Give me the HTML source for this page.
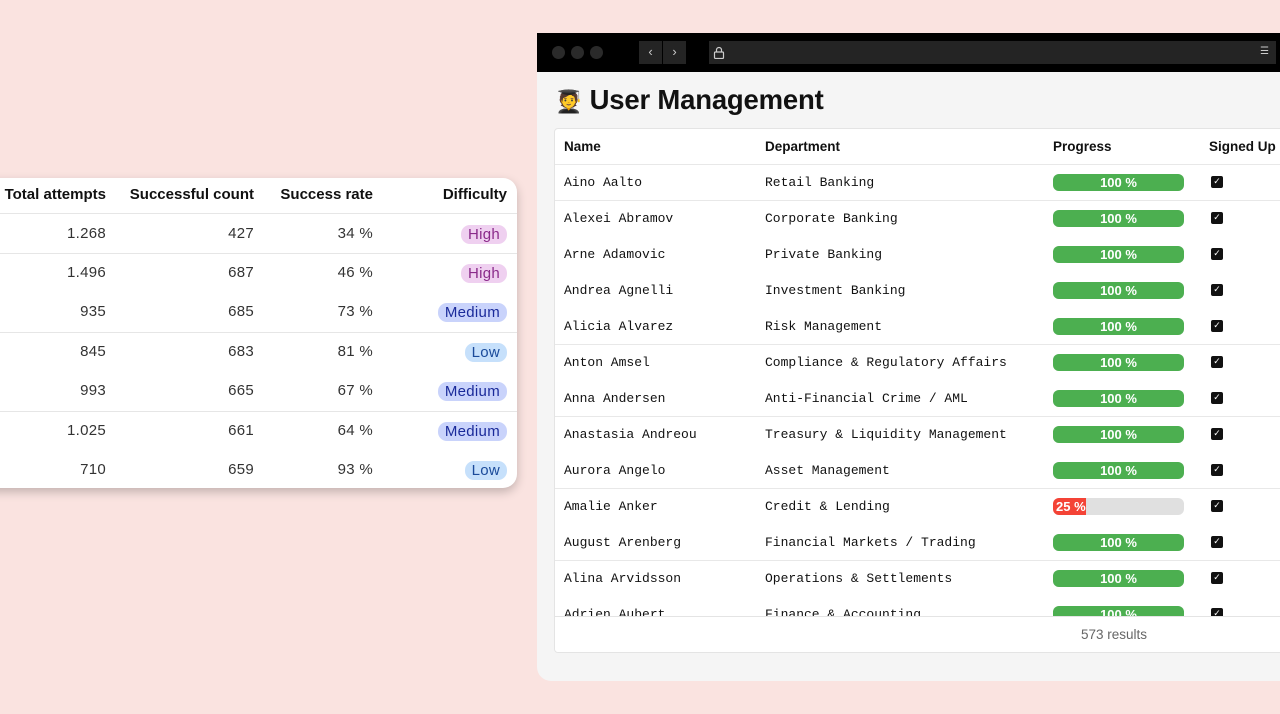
<!DOCTYPE html>
<html><head><meta charset="utf-8"><style>
*{box-sizing:border-box;margin:0;padding:0}
body{width:1280px;height:714px;background:#fae3e0;position:relative;overflow:hidden;font-family:"Liberation Sans",sans-serif;color:#111}
.lc{position:absolute;left:-20px;top:178px;width:537px;height:310px;background:#fff;border-radius:14px;box-shadow:0 4px 10px rgba(0,0,0,.22)}
.lc .r{position:absolute;left:0;width:537px;height:20px;font-size:15px;color:#333;letter-spacing:.3px}
.lc .r span{position:absolute;text-align:right;white-space:nowrap}
.lc .h{font-weight:bold;color:#111;letter-spacing:0}
.c1{right:411px}.c2{right:263px}.c3{right:144px}.c4{right:10px}
.hl{position:absolute;left:0;width:537px;height:1px;background:#e6e6e6}
.b{display:inline-block;border-radius:9px;padding:1px 7px;line-height:17px}
.hi{background:#efd0f0;color:#8a2a8a}.me{background:#c9d3fb;color:#1a2a9a}.lo{background:#c6e0fb;color:#1a4a9a}
.win{position:absolute;left:537px;top:33px;width:750px;height:648px;background:#f5f5f5;border-radius:0 0 0 14px;overflow:hidden}
.bar{height:39px;background:#000;position:relative}
.dot{position:absolute;top:13px;width:13px;height:13px;border-radius:50%;background:#2a2a2a}
.nav{position:absolute;top:8px;height:23px;background:#242424;color:#ccc;font-size:13px;text-align:center;line-height:22px}
h1{position:absolute;left:18px;top:51px;font-size:27.5px;font-weight:bold;letter-spacing:-.2px}
.card{position:absolute;left:17px;top:95px;width:740px;height:525px;background:#fff;border:1px solid #e4e4e4;border-radius:4px;overflow:hidden}
.row{position:absolute;left:0;width:740px;height:36px;font-family:"Liberation Mono",monospace;font-size:13px;color:#111}
.row div{position:absolute;top:11px;white-space:nowrap}
.th{font-family:"Liberation Sans",sans-serif;font-weight:bold;font-size:13.5px}
.pg{position:absolute;left:498px;top:10px;width:131px;height:17px;border-radius:6px;background:#e0e0e0;overflow:hidden}
.pg i{position:absolute;left:0;top:0;bottom:0;background:#4caf50;color:#fff;font:bold 13px "Liberation Sans",sans-serif;font-style:normal;text-align:center;line-height:18px}
.cb{position:absolute;left:656px;top:12px;width:12px;height:12px;background:#111;border-radius:2px;color:#fff;font-size:9px;line-height:12px;text-align:center;font-family:"DejaVu Sans",sans-serif}
.ln{position:absolute;left:0;width:740px;height:1px;background:#e8e8e8}
</style></head><body>
<div class="lc">
<div class="r h" style="top:8px"><span class="c1">Total attempts</span><span class="c2">Successful count</span><span class="c3">Success rate</span><span class="c4">Difficulty</span></div>
<div class="hl" style="top:35px"></div>
<div class="r" style="top:47px"><span class="c1">1.268</span><span class="c2">427</span><span class="c3">34 %</span><span class="c4"><b class="b hi" style="font-weight:normal">High</b></span></div>
<div class="hl" style="top:75px"></div>
<div class="r" style="top:86px"><span class="c1">1.496</span><span class="c2">687</span><span class="c3">46 %</span><span class="c4"><b class="b hi" style="font-weight:normal">High</b></span></div>
<div class="r" style="top:125px"><span class="c1">935</span><span class="c2">685</span><span class="c3">73 %</span><span class="c4"><b class="b me" style="font-weight:normal">Medium</b></span></div>
<div class="hl" style="top:154px"></div>
<div class="r" style="top:165px"><span class="c1">845</span><span class="c2">683</span><span class="c3">81 %</span><span class="c4"><b class="b lo" style="font-weight:normal">Low</b></span></div>
<div class="r" style="top:204px"><span class="c1">993</span><span class="c2">665</span><span class="c3">67 %</span><span class="c4"><b class="b me" style="font-weight:normal">Medium</b></span></div>
<div class="hl" style="top:233px"></div>
<div class="r" style="top:244px"><span class="c1">1.025</span><span class="c2">661</span><span class="c3">64 %</span><span class="c4"><b class="b me" style="font-weight:normal">Medium</b></span></div>
<div class="r" style="top:283px"><span class="c1">710</span><span class="c2">659</span><span class="c3">93 %</span><span class="c4"><b class="b lo" style="font-weight:normal">Low</b></span></div>
</div>
<div class="win">
<div class="bar">
<div class="dot" style="left:15px"></div><div class="dot" style="left:34px"></div><div class="dot" style="left:53px"></div>
<div class="nav" style="left:102px;width:23px">‹</div><div class="nav" style="left:126px;width:23px">›</div>
<div class="nav" style="left:172px;width:544px;text-align:left;padding-left:4px"><svg width="12" height="13" viewBox="0 0 12 13" style="margin-top:5px"><rect x="1.5" y="6" width="9" height="6.5" rx="1" fill="none" stroke="#ccc" stroke-width="1.2"/><path d="M3.5 6V4a2.5 2.5 0 0 1 5 0v2" fill="none" stroke="#ccc" stroke-width="1.2"/></svg></div>
<div class="nav" style="left:716px;width:23px;font-size:10px">☰</div>
</div>
<h1><span style="font-family:'DejaVu Sans',sans-serif;font-size:22px">🧑‍🎓</span> User Management</h1>
<div class="card">
<div class="row th" style="top:0"><div style="left:9px;top:10px">Name</div><div style="left:210px;top:10px">Department</div><div style="left:498px;top:10px">Progress</div><div style="left:654px;top:10px">Signed Up</div></div>
<div class="ln" style="top:35px"></div>
<div class="row" style="top:35px"><div style="left:9px">Aino Aalto</div><div style="left:210px">Retail Banking</div><span class="pg"><i style="width:100%">100 %</i></span><span class="cb">✓</span></div>
<div class="ln" style="top:71px"></div>
<div class="row" style="top:71px"><div style="left:9px">Alexei Abramov</div><div style="left:210px">Corporate Banking</div><span class="pg"><i style="width:100%">100 %</i></span><span class="cb">✓</span></div>
<div class="row" style="top:107px"><div style="left:9px">Arne Adamovic</div><div style="left:210px">Private Banking</div><span class="pg"><i style="width:100%">100 %</i></span><span class="cb">✓</span></div>
<div class="row" style="top:143px"><div style="left:9px">Andrea Agnelli</div><div style="left:210px">Investment Banking</div><span class="pg"><i style="width:100%">100 %</i></span><span class="cb">✓</span></div>
<div class="row" style="top:179px"><div style="left:9px">Alicia Alvarez</div><div style="left:210px">Risk Management</div><span class="pg"><i style="width:100%">100 %</i></span><span class="cb">✓</span></div>
<div class="ln" style="top:215px"></div>
<div class="row" style="top:215px"><div style="left:9px">Anton Amsel</div><div style="left:210px">Compliance &amp; Regulatory Affairs</div><span class="pg"><i style="width:100%">100 %</i></span><span class="cb">✓</span></div>
<div class="row" style="top:251px"><div style="left:9px">Anna Andersen</div><div style="left:210px">Anti-Financial Crime / AML</div><span class="pg"><i style="width:100%">100 %</i></span><span class="cb">✓</span></div>
<div class="ln" style="top:287px"></div>
<div class="row" style="top:287px"><div style="left:9px">Anastasia Andreou</div><div style="left:210px">Treasury &amp; Liquidity Management</div><span class="pg"><i style="width:100%">100 %</i></span><span class="cb">✓</span></div>
<div class="row" style="top:323px"><div style="left:9px">Aurora Angelo</div><div style="left:210px">Asset Management</div><span class="pg"><i style="width:100%">100 %</i></span><span class="cb">✓</span></div>
<div class="ln" style="top:359px"></div>
<div class="row" style="top:359px"><div style="left:9px">Amalie Anker</div><div style="left:210px">Credit &amp; Lending</div><span class="pg"><i style="width:25%;background:#f44336;text-align:left;padding-left:3px;overflow:visible;white-space:nowrap">25 %</i></span><span class="cb">✓</span></div>
<div class="row" style="top:395px"><div style="left:9px">August Arenberg</div><div style="left:210px">Financial Markets / Trading</div><span class="pg"><i style="width:100%">100 %</i></span><span class="cb">✓</span></div>
<div class="ln" style="top:431px"></div>
<div class="row" style="top:431px"><div style="left:9px">Alina Arvidsson</div><div style="left:210px">Operations &amp; Settlements</div><span class="pg"><i style="width:100%">100 %</i></span><span class="cb">✓</span></div>
<div class="row" style="top:467px"><div style="left:9px">Adrien Aubert</div><div style="left:210px">Finance &amp; Accounting</div><span class="pg"><i style="width:100%">100 %</i></span><span class="cb">✓</span></div>
<div style="position:absolute;left:0;top:487px;width:740px;height:38px;background:#fff;border-top:1px solid #e4e4e4;font-size:13.5px;color:#666;line-height:36px"><span style="position:absolute;left:526px">573 results</span></div>
</div>
</div>
</body></html>
